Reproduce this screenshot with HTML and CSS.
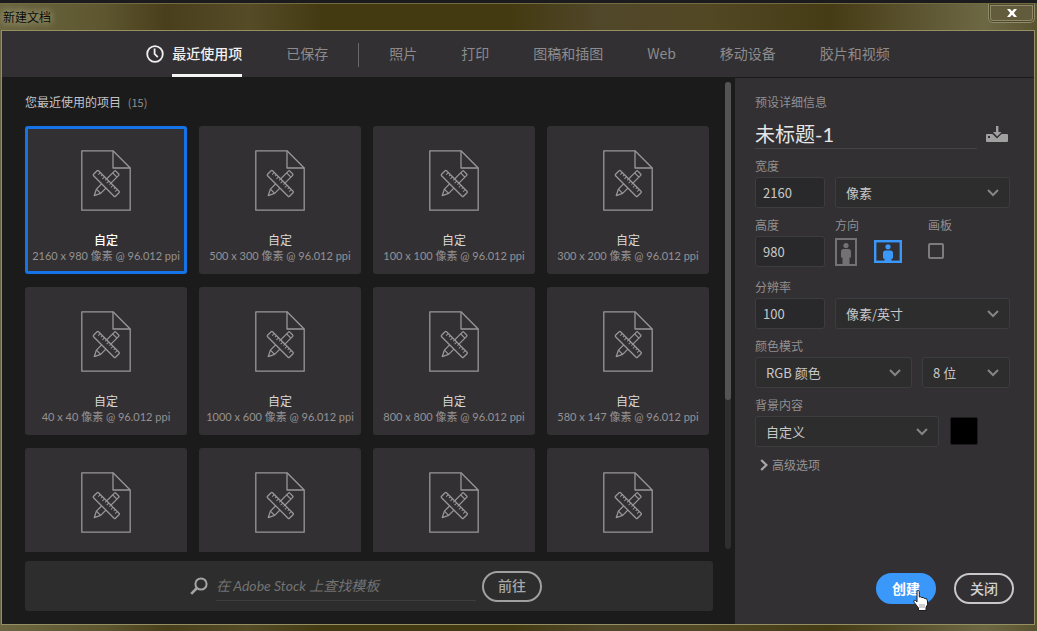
FILE: index.html
```html
<!doctype html>
<html lang="zh-CN">
  <head>
    <meta charset="utf-8">
    <meta name="viewport" content="width=device-width, initial-scale=1">
    <title>新建文档</title>
    <link rel="stylesheet" href="styles.css">
  </head>
  <body>
    <!-- shared icons -->
    <svg class="sprite" aria-hidden="true">
      <symbol id="icon-doc" viewBox="0 0 50 61">
        <g fill="none" stroke="currentColor" stroke-width="1.3" stroke-linejoin="round">
          <path d="M.8.8H32L49.2 18V60.2H.8Z"/>
          <path d="M32 .8V18H49.2"/>
          <g transform="translate(25.3 33.5) rotate(45)">
            <path d="M-3 -14.5Q-3 -15.5 -2 -15.5H2Q3 -15.5 3 -14.5V11L0 17L-3 11Z"/>
            <path d="M-3 -12H3M-3 11H3"/>
          </g>
          <g transform="translate(25.3 33.5) rotate(45)">
            <rect x="-15.5" y="-3.5" width="31" height="7" rx="1" fill="#323032"/>
            <path d="M-12 -3.5V-.5M-9 -3.5V-1.5M-6 -3.5V-.5M-3 -3.5V-1.5M0 -3.5V-.5M3 -3.5V-1.5M6 -3.5V-.5M9 -3.5V-1.5M12 -3.5V-.5" stroke-width="1"/>
          </g>
        </g>
      </symbol>
    </svg>

    <div class="window">
      <header class="titlebar">
        <span class="titlebar-text">新建文档</span>
        <button type="button" class="titlebar-close" aria-label="关闭窗口">
          <svg width="10" height="8" viewBox="0 0 10 8"><path d="M0 0H3L5 2.2L7 0H10L6.8 4L10 8H7L5 5.8L3 8H0L3.2 4Z" fill="#fff"/></svg>
        </button>
      </header>

      <div class="dialog">
        <nav class="tabs">
          <button type="button" class="tab active">
            <svg class="tab-icon" width="18" height="18" viewBox="0 0 18 18"><g fill="none" stroke="currentColor" stroke-width="1.8"><circle cx="9" cy="9" r="7.8"/><path d="M8.6 3.5V9L11.8 12.2"/></g></svg>
            <span class="tab-text">最近使用项</span>
          </button>
          <button type="button" class="tab"><span class="tab-text">已保存</span></button>
          <span class="tab-divider"></span>
          <button type="button" class="tab"><span class="tab-text">照片</span></button>
          <button type="button" class="tab"><span class="tab-text">打印</span></button>
          <button type="button" class="tab"><span class="tab-text">图稿和插图</span></button>
          <button type="button" class="tab"><span class="tab-text">Web</span></button>
          <button type="button" class="tab"><span class="tab-text">移动设备</span></button>
          <button type="button" class="tab"><span class="tab-text">胶片和视频</span></button>
        </nav>

        <div class="content">
          <main class="library">
            <div class="library-main">
              <h2 class="library-title">您最近使用的项目 <span class="count">(15)</span></h2>
              <div class="presets">
                <button type="button" class="preset selected">
                  <svg class="preset-icon"><use href="#icon-doc"/></svg>
                  <span class="preset-name">自定</span>
                  <span class="preset-size">2160 x 980 像素 @ 96.012 ppi</span>
                </button>
                <button type="button" class="preset">
                  <svg class="preset-icon"><use href="#icon-doc"/></svg>
                  <span class="preset-name">自定</span>
                  <span class="preset-size">500 x 300 像素 @ 96.012 ppi</span>
                </button>
                <button type="button" class="preset">
                  <svg class="preset-icon"><use href="#icon-doc"/></svg>
                  <span class="preset-name">自定</span>
                  <span class="preset-size">100 x 100 像素 @ 96.012 ppi</span>
                </button>
                <button type="button" class="preset">
                  <svg class="preset-icon"><use href="#icon-doc"/></svg>
                  <span class="preset-name">自定</span>
                  <span class="preset-size">300 x 200 像素 @ 96.012 ppi</span>
                </button>
                <button type="button" class="preset">
                  <svg class="preset-icon"><use href="#icon-doc"/></svg>
                  <span class="preset-name">自定</span>
                  <span class="preset-size">40 x 40 像素 @ 96.012 ppi</span>
                </button>
                <button type="button" class="preset">
                  <svg class="preset-icon"><use href="#icon-doc"/></svg>
                  <span class="preset-name">自定</span>
                  <span class="preset-size">1000 x 600 像素 @ 96.012 ppi</span>
                </button>
                <button type="button" class="preset">
                  <svg class="preset-icon"><use href="#icon-doc"/></svg>
                  <span class="preset-name">自定</span>
                  <span class="preset-size">800 x 800 像素 @ 96.012 ppi</span>
                </button>
                <button type="button" class="preset">
                  <svg class="preset-icon"><use href="#icon-doc"/></svg>
                  <span class="preset-name">自定</span>
                  <span class="preset-size">580 x 147 像素 @ 96.012 ppi</span>
                </button>
                <button type="button" class="preset"><svg class="preset-icon"><use href="#icon-doc"/></svg></button>
                <button type="button" class="preset"><svg class="preset-icon"><use href="#icon-doc"/></svg></button>
                <button type="button" class="preset"><svg class="preset-icon"><use href="#icon-doc"/></svg></button>
                <button type="button" class="preset"><svg class="preset-icon"><use href="#icon-doc"/></svg></button>
              </div>
              <form class="search">
                <svg width="18" height="18" viewBox="0 0 18 18"><g fill="none" stroke="#a5a5a5" stroke-width="2"><circle cx="11" cy="7" r="5.6"/><path d="M7 11L1.2 16.8" stroke-width="2.6"/></g></svg>
                <input type="text" class="search-input" placeholder="在 Adobe Stock 上查找模板" aria-label="在 Adobe Stock 上查找模板">
                <button type="button" class="pill pill-go">前往</button>
              </form>
            </div>
            <div class="scrollbar"><div class="scrollbar-thumb"></div></div>
          </main>

          <aside class="details">
            <form class="details-form">
              <label class="label" for="docName">预设详细信息</label>
              <div class="name-row">
                <input type="text" id="docName" class="name-input" value="未标题-1">
                <button type="button" class="icon-button" aria-label="保存预设">
                  <svg width="22" height="16" viewBox="0 0 22 16"><path fill="#a0a0a0" fill-rule="evenodd" d="M1 8H6.5L11 12.4L15.5 8H21Q22 8 22 9V15Q22 16 21 16H1Q0 16 0 15V9Q0 8 1 8ZM2 10V12H4V10ZM10 0H12.4V6H15.5L11.2 10.4L7 6H10Z"/></svg>
                </button>
              </div>

              <div class="fields">
                <div class="group">
                  <label class="label" for="width">宽度</label>
                  <input type="text" id="width" class="box" value="2160">
                </div>
                <div class="group grow end">
                  <select class="box" aria-label="单位"><option>像素</option></select>
                </div>
              </div>

              <div class="fields fields-size">
                <div class="group">
                  <label class="label" for="height">高度</label>
                  <input type="text" id="height" class="box" value="980">
                </div>
                <fieldset class="group orientation">
                  <legend class="label">方向</legend>
                  <div class="orientation-options">
                    <label class="orient">
                      <input type="radio" name="orient" aria-label="纵向">
                      <svg width="22" height="28" viewBox="0 0 22 28"><rect x="1" y="1" width="20" height="26" fill="none" stroke="currentColor" stroke-width="2"/><circle cx="11" cy="7.5" r="2.6" fill="currentColor"/><path fill="currentColor" d="M8.5 11H13.5Q16 11 16 14V19.5H14.5V27H7.5V19.5H6V14Q6 11 8.5 11Z"/></svg>
                    </label>
                    <label class="orient">
                      <input type="radio" name="orient" aria-label="横向" checked>
                      <svg width="28" height="23" viewBox="0 0 28 23"><rect x="1.2" y="1.2" width="25.6" height="20.6" fill="none" stroke="currentColor" stroke-width="2.4"/><circle cx="14" cy="6.8" r="2.6" fill="currentColor"/><path fill="currentColor" d="M11.5 10.4H16.5Q19 10.4 19 13V18.5H17.5V22H10.5V18.5H9V13Q9 10.4 11.5 10.4Z"/></svg>
                    </label>
                  </div>
                </fieldset>
                <div class="group">
                  <label class="label" for="artboard">画板</label>
                  <div class="check-row"><input type="checkbox" id="artboard" class="check"></div>
                </div>
              </div>

              <div class="fields">
                <div class="group">
                  <label class="label" for="resolution">分辨率</label>
                  <input type="text" id="resolution" class="box" value="100">
                </div>
                <div class="group grow end">
                  <select class="box" aria-label="分辨率单位"><option>像素/英寸</option></select>
                </div>
              </div>

              <div class="fields">
                <div class="group grow">
                  <label class="label" for="mode">颜色模式</label>
                  <select id="mode" class="box"><option>RGB 颜色</option></select>
                </div>
                <div class="group group-depth end">
                  <select class="box" aria-label="位深度"><option>8 位</option></select>
                </div>
              </div>

              <div class="fields">
                <div class="group grow">
                  <label class="label" for="background">背景内容</label>
                  <select id="background" class="box"><option>自定义</option></select>
                </div>
                <div class="group group-swatch end">
                  <button type="button" class="swatch" aria-label="背景颜色"></button>
                </div>
              </div>

              <button type="button" class="advanced">
                <svg width="8" height="12" viewBox="0 0 8 12"><path d="M1.2 1L6.4 6L1.2 11" fill="none" stroke="#a8a8a8" stroke-width="2.2"/></svg>
                高级选项
              </button>
            </form>

            <div class="actions">
              <button type="button" class="pill pill-create">创建
                <svg class="pointer" width="16" height="21" viewBox="0 0 16 21"><path d="M4 1.5Q4 .5 5 .5T6.3 1.5V7Q8 6.3 8.8 7.6Q10.4 7 11.3 8.4Q14.5 7.8 14.5 11V14.5L13 17.5V20.5H5.5V18L1.3 12.5Q.2 10.8 1.3 10.3Q2.5 10 4 12Z" fill="#fff" stroke="#1b1b1b" stroke-width="1"/><path d="M7 14V18M9 14V18M11 14V18" stroke="#888" stroke-width=".8"/></svg>
              </button>
              <button type="button" class="pill pill-close">关闭</button>
            </div>
          </aside>
        </div>
      </div>
    </div>
  </body>
</html>
```
FILE: styles.css
```css
* {
  box-sizing: border-box;
}
body {
  margin: 0;
  background-color: #1b1b1c;
  color: #d0d0d0;
  font-family: "Noto Sans CJK SC", "Noto Sans", sans-serif;
  font-size: 12px;
}
button, input, select {
  font-family: inherit;
  color: inherit;
}
button {
  background: none;
  border: none;
  padding: 0;
  cursor: pointer;
}
svg {
  display: block;
}
.sprite {
  display: none;
}

/* window frame */
.window {
  display: flex;
  flex-direction: column;
  height: 100vh;
  padding: 0 2px 6px 1px;
  border-top: 3px solid #1b1b1e;
  background: linear-gradient(90deg, #6c6742 0%, #5d562f 10%, #4a3f1c 16%, #554b27 24%, #443a12 31%, #433a11 49%, #51472a 58%, #524824 68%, #453b15 80%, #5b532f 88%, #6d6844 95%, #5a5330 100%);
}
.titlebar {
  display: flex;
  justify-content: space-between;
  align-items: center;
  height: 27px;
  padding-bottom: 2px;
  border-top: 1px solid #716b42;
}
.titlebar-text {
  padding-left: 2px;
  color: #0c0c08;
  text-shadow: 0 0 6px #aaa683, 0 0 8px #aaa683;
}
.titlebar-close {
  display: flex;
  justify-content: center;
  align-items: center;
  align-self: flex-start;
  width: 47px;
  height: 19px;
  border: 1px solid #8f8a69;
  border-top: none;
  border-radius: 0 0 5px 5px;
  background-color: #625c3d;
  box-shadow: inset 0 0 0 1px #4e482b, inset 0 0 0 2px #8f8a69;
}
.dialog {
  display: flex;
  flex: 1;
  flex-direction: column;
  min-height: 0;
  border: 1px solid #958f61;
  background-color: #1b1b1c;
}

/* category tabs */
.tabs {
  display: flex;
  justify-content: center;
  gap: 44px;
  height: 46px;
  background-color: #323032;
}
.tab {
  display: flex;
  align-items: center;
  gap: 8px;
  color: #8d8b8d;
  font-size: 14px;
}
.tab-text {
  display: flex;
  align-items: center;
  height: 46px;
  border-bottom: 3px solid transparent;
}
.tab.active {
  color: #f0f0f0;
  font-weight: 500;
}
.tab.active .tab-text {
  border-color: #f5f5f5;
}
.tab-divider {
  width: 1px;
  height: 24px;
  margin: 12px -14px 0;
  background-color: #6a686a;
}

.content {
  display: flex;
  flex: 1;
  min-height: 0;
}

/* recent documents */
.library {
  display: flex;
  flex: 1;
  gap: 12px;
  min-width: 0;
  padding: 5px 4px 13px 23px;
}
.library-main {
  display: flex;
  flex: 1;
  flex-direction: column;
  min-width: 0;
}
.library-title {
  margin: 0;
  padding: 11px 0 15px;
  color: #c4c4c4;
  font-size: 12px;
  font-weight: 400;
  line-height: 18px;
}
.count {
  margin-left: 4px;
  color: #8f8f8f;
  font-size: 11px;
}
.presets {
  display: grid;
  flex: 1;
  grid-template-columns: repeat(4, minmax(0, 1fr));
  grid-auto-rows: min-content;
  gap: 13px 12px;
  min-height: 0;
  margin-right: 4px;
  overflow: hidden;
}
.preset {
  display: flex;
  flex-direction: column;
  align-items: center;
  min-height: 148px;
  padding: 24px 4px 10px;
  border-radius: 3px;
  background-color: #323032;
  font-size: 12px;
  line-height: 16px;
  white-space: nowrap;
}
.preset.selected {
  box-shadow: inset 0 0 0 3px #1473e6;
}
.preset-icon {
  width: 50px;
  height: 61px;
  margin-bottom: 21px;
  color: #98969a;
}
.preset-name {
  color: #d8d8d8;
}
.selected .preset-name {
  color: #fff;
  font-weight: 500;
}
.preset-size {
  color: #949294;
  font-family: Lato, "Noto Sans CJK SC", sans-serif;
  font-size: 11px;
}
.search {
  display: flex;
  justify-content: center;
  align-items: center;
  height: 50px;
  margin-top: 9px;
  padding-right: 6px;
  border-radius: 3px;
  background-color: #2d2d2d;
}
.search-input {
  width: 260px;
  height: 30px;
  margin: 0 6px 0 8px;
  padding: 0;
  border: none;
  border-bottom: 1px solid #3d3d3d;
  background: none;
  font-family: Lato, "Noto Sans CJK SC", sans-serif;
  font-size: 14px;
  font-style: italic;
}
.search-input::placeholder {
  color: #737373;
}
.scrollbar {
  width: 6px;
  margin-bottom: 62px;
  border-radius: 3px;
  background-color: #2f2f30;
}
.scrollbar-thumb {
  height: 68%;
  border-radius: 3px;
  background-color: #545455;
}

.pill {
  width: 60px;
  height: 31px;
  padding-bottom: 2px;
  border: 2px solid #a0a0a0;
  border-radius: 16px;
  font-size: 14px;
  font-weight: 500;
  line-height: 20px;
}
.pill-go {
  color: #a8a8a8;
}
.pill-create {
  position: relative;
  border-color: #3a98fb;
  background-color: #3a98fb;
  color: #fff;
  font-weight: 700;
}
.pill-close {
  border-color: #c8c8c8;
  color: #d0d0d0;
}

/* preset details */
.details {
  display: flex;
  flex-direction: column;
  justify-content: space-between;
  width: 299px;
  margin-top: 1px;
  padding: 15px 20px 20px;
  background-color: #323032;
}
.details-form {
  display: flex;
  flex-direction: column;
  gap: 8px;
  padding-right: 4px;
}
.label {
  display: block;
  height: 18px;
  padding: 0;
  color: #918f91;
  line-height: 18px;
}
.name-row {
  display: flex;
  justify-content: space-between;
  align-items: center;
}
.name-input {
  width: 222px;
  height: 30px;
  padding: 0;
  border: none;
  border-bottom: 1px solid #444245;
  background: none;
  color: #e6e6e6;
  font-family: Lato, "Noto Sans CJK SC", sans-serif;
  font-size: 20px;
}
.icon-button {
  padding-right: 2px;
}
.fields {
  display: flex;
  gap: 10px;
}
.fields-size {
  padding-bottom: 3px;
}
.group {
  display: flex;
  flex-direction: column;
  gap: 2px;
  width: 70px;
  margin: 0;
  padding: 0;
  border: none;
}
.group.grow {
  flex: 1;
}
.group.end {
  justify-content: flex-end;
}
.group-depth {
  width: 88px;
}
.group-swatch {
  width: 61px;
}
.box {
  width: 100%;
  height: 31px;
  padding: 0 7px;
  border: 1px solid #3d3d3f;
  border-radius: 3px;
  background-color: #29292b;
  color: #c8c8c8;
  font-size: 13px;
}
select.box {
  padding: 0 28px 0 10px;
  appearance: none;
  background: #2d2d2e url("data:image/svg+xml,%3Csvg xmlns='http://www.w3.org/2000/svg' width='12' height='8'%3E%3Cpath d='M1 1L6 6L11 1' fill='none' stroke='%23858585' stroke-width='2'/%3E%3C/svg%3E") no-repeat right 10px center;
}
.group.orientation {
  display: block;
  width: 83px;
}
.orientation-options {
  display: flex;
  align-items: center;
  gap: 17px;
  height: 31px;
  margin-top: 2px;
}
.orient {
  color: #737173;
}
.orient:has(input:checked) {
  color: #3a98fb;
}
.orient input {
  position: absolute;
  opacity: 0;
  margin: 0;
}
.check-row {
  display: flex;
  align-items: center;
  height: 29px;
}
.check {
  width: 16px;
  height: 16px;
  margin: 0;
  appearance: none;
  border: 2px solid #7d7b7d;
  border-radius: 2px;
}
.swatch {
  width: 28px;
  height: 28px;
  margin: 0 0 2px 1px;
  border: 1px solid #1c1c1c;
  border-radius: 2px;
  background-color: #000;
}
.advanced {
  display: flex;
  align-items: center;
  gap: 4px;
  padding: 0 5px;
  color: #959395;
  font-size: 12px;
  line-height: 20px;
}
.actions {
  display: flex;
  justify-content: flex-end;
  gap: 18px;
}
/* hand cursor resting on the create button */
.pointer {
  position: absolute;
  top: 15px;
  left: 35px;
}
```
